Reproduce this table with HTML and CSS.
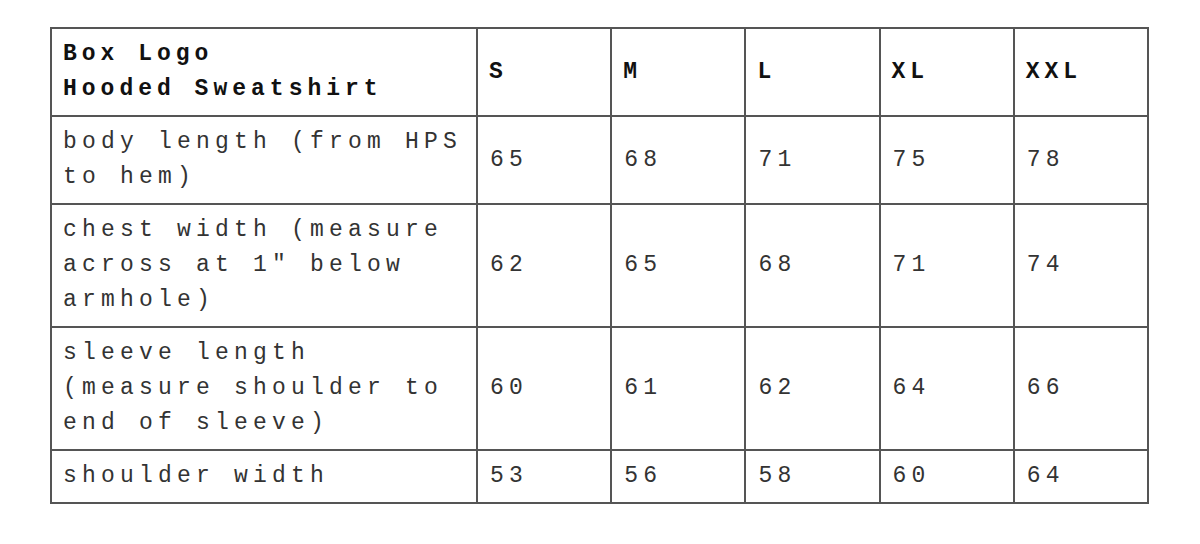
FILE: index.html
```html
<!DOCTYPE html>
<html>
<head>
<meta charset="utf-8">
<link rel="stylesheet" href="styles.css">
</head>
<body>
<div class="page">
<table class="size-table">
  <colgroup>
    <col class="c-label">
    <col class="c-size">
    <col class="c-size">
    <col class="c-size">
    <col class="c-size">
    <col class="c-size">
  </colgroup>
  <thead>
    <tr>
      <th>Box Logo<br>Hooded Sweatshirt</th>
      <th>S</th>
      <th>M</th>
      <th>L</th>
      <th>XL</th>
      <th>XXL</th>
    </tr>
  </thead>
  <tbody>
    <tr>
      <td>body length (from HPS to hem)</td>
      <td>65</td><td>68</td><td>71</td><td>75</td><td>78</td>
    </tr>
    <tr>
      <td>chest width (measure across at 1" below armhole)</td>
      <td>62</td><td>65</td><td>68</td><td>71</td><td>74</td>
    </tr>
    <tr>
      <td>sleeve length (measure shoulder to end of sleeve)</td>
      <td>60</td><td>61</td><td>62</td><td>64</td><td>66</td>
    </tr>
    <tr>
      <td>shoulder width</td>
      <td>53</td><td>56</td><td>58</td><td>60</td><td>64</td>
    </tr>
  </tbody>
</table>
</div>
</body>
</html>
```

FILE: styles.css
```css
html, body {
  margin: 0;
  padding: 0;
  background: #ffffff;
}

.page {
  padding: 27px 0 0 50px;
}

.size-table {
  border-collapse: collapse;
  table-layout: fixed;
  width: 1097px;
  font-family: "Liberation Mono", "Courier New", monospace;
  font-size: 23px;
  letter-spacing: 5.2px;
  line-height: 35px;
  color: #333333;
}

.c-label { width: 426px; }
.c-size { width: 134.2px; }

.size-table th,
.size-table td {
  border: 2px solid #555555;
  padding: 8px 10px 8px 11px;
  text-align: left;
  vertical-align: middle;
}

.size-table th {
  font-weight: bold;
  color: #111111;
  letter-spacing: 5px;
}

.size-table td:not(:first-child) {
  padding-left: 12px;
}
```
